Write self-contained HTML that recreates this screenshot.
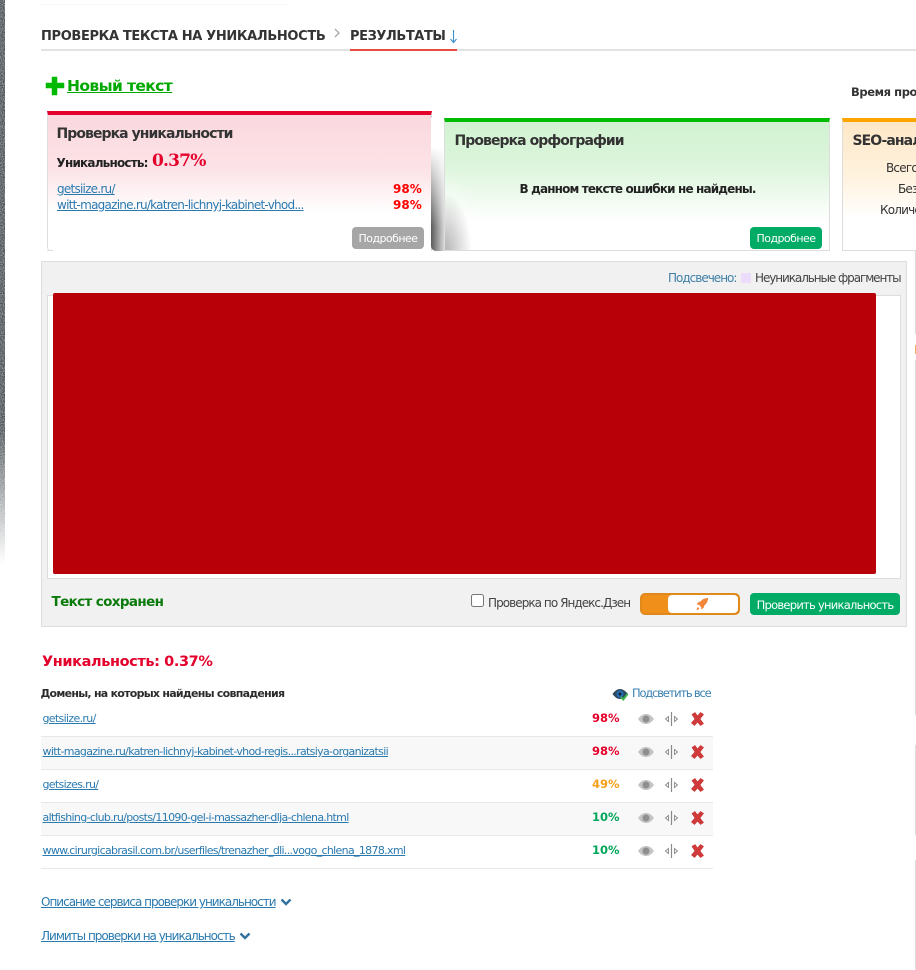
<!DOCTYPE html>
<html lang="ru"><head><meta charset="utf-8"><title>Проверка текста</title>
<style>
html,body{margin:0;padding:0;background:#fff}
#p{position:relative;width:916px;height:970px;overflow:hidden;background:#fff;font-family:"DejaVu Sans","Liberation Sans",sans-serif;color:#333}
#p div,#p a,#p svg{position:absolute;white-space:nowrap}
a{color:#2a7ab0;text-decoration:underline}
.b{font-weight:bold}
.s{font-size:11px;letter-spacing:-.67px;line-height:14px}
.h{font-size:14px;font-weight:bold;letter-spacing:-.94px;line-height:18px;color:#333}
.btn{border-radius:4px;color:#fff;text-align:center;font-size:11px;letter-spacing:-.55px;height:22px;line-height:23px}
.row{left:41px;width:672px;height:33px;border-bottom:1px solid #e8e8e8;box-sizing:border-box}
.pc{left:592px;font-size:11.5px;font-weight:bold;letter-spacing:0;line-height:14px}
</style></head><body><div id="p">

<svg style="left:0;top:0" width="5" height="575" viewBox="0 0 5 575">
<filter id="n" x="0" y="0" width="100%" height="100%"><feTurbulence type="fractalNoise" baseFrequency=".9" numOctaves="2" seed="4"/><feColorMatrix values="0 0 0 0 .45  0 0 0 0 .45  0 0 0 0 .47  1.600 0 0 0 -.55"/></filter>
<rect width="5" height="575" fill="#4a5155"/>
<rect width="5" height="575" filter="url(#n)" style="mix-blend-mode:screen"/>
</svg>
<div style="left:0;top:430px;width:6px;height:145px;background:linear-gradient(180deg,rgba(255,255,255,0),#fff 92%)"></div>
<div style="left:40px;top:4px;width:250px;height:1px;background:#f9f9f9"></div>

<div class="b" style="left:41px;top:28px;font-size:13px;letter-spacing:-.35px;line-height:18px;color:#333">ПРОВЕРКА ТЕКСТА НА УНИКАЛЬНОСТЬ</div>
<svg style="left:333px;top:28px" width="9" height="11" viewBox="0 0 9 11"><path d="M2 1l4 4-4 4" fill="none" stroke="#aaa" stroke-width="1.3"/></svg>
<div class="b" style="left:350px;top:28px;font-size:13px;letter-spacing:-.42px;line-height:18px;color:#333">РЕЗУЛЬТАТЫ</div>
<svg style="left:449px;top:29px" width="9" height="15" viewBox="0 0 9 15"><path d="M4.500 1v12M1.500 10l3 3.500 3-3.500" fill="none" stroke="#3a8fc5" stroke-width="1.100"/></svg>
<div style="left:41px;top:49px;width:875px;height:2px;background:#e2e2e2"></div>
<div style="left:350px;top:49px;width:107px;height:2px;background:#e74c3c"></div>

<svg style="left:45px;top:76px" width="20" height="20" viewBox="0 0 20 20"><path d="M7 1h5v6h7v5h-7v7H7v-7H1V7h6z" fill="#00b900" stroke="#00b900" stroke-width=".5" stroke-linejoin="round"/></svg>
<a class="b" href="#" style="left:67px;top:76px;font-size:15.500px;letter-spacing:-.62px;line-height:20px;color:#00a800">Новый текст</a>
<div class="b" style="left:851px;top:85px;font-size:11.500px;letter-spacing:-.4px;line-height:15px;color:#333">Время про</div>

<!-- card 1 -->
<div style="left:47px;top:111px;width:385px;height:140px;box-sizing:border-box;border-top:4px solid #e4002b;border-left:1px solid #ddd;border-right:1px solid #ddd;border-bottom-left-radius:4px;background:linear-gradient(180deg,#fad8de 0,#fce3e7 40%,#fff 72%,#fff 100%)"></div>
<div style="left:47px;top:250px;width:6px;height:1px;background:#ddd"></div>
<div class="h" style="left:56.500px;top:125px">Проверка уникальности</div>
<div class="b" style="left:56.500px;top:155px;font-size:12px;letter-spacing:-.8px;line-height:16px;color:#222">Уникальность:</div>
<div class="b" style="left:152px;top:150px;font-family:'DejaVu Serif','Liberation Serif',serif;font-size:17px;letter-spacing:-.8px;line-height:22px;color:#e4002b">0.37%</div>
<a class="s" href="#" style="left:57px;top:182px;font-size:12px;letter-spacing:-.75px">getsiize.ru/</a>
<a class="s" href="#" style="left:57px;top:198px;font-size:12px;letter-spacing:-.75px">witt-magazine.ru/katren-lichnyj-kabinet-vhod...</a>
<div class="b" style="left:393px;top:182px;font-size:12px;letter-spacing:0;line-height:14px;color:#f00">98%</div>
<div class="b" style="left:393px;top:198px;font-size:12px;letter-spacing:0;line-height:14px;color:#f00">98%</div>
<div class="btn" style="left:352px;top:227px;width:72px;background:#a6a6a6">Подробнее</div>

<!-- shadow between -->
<div style="left:431px;top:118px;width:13px;height:133px;border-bottom-left-radius:5px;background:linear-gradient(180deg,#fff 22%,rgba(255,255,255,0) 82%),linear-gradient(90deg,#5a5a5a,#d5d5d5)"></div>

<!-- card 2 -->
<div style="left:444px;top:118px;width:386px;height:133px;box-sizing:border-box;border-top:4px solid #00bb00;border-left:1px solid #ddd;border-right:1px solid #ddd;border-bottom:1px solid #ddd;background:linear-gradient(180deg,#d2f2d2 0,#dcf5dc 35%,#fff 78%)"></div>
<div style="left:445px;top:160px;width:40px;height:90px;background:radial-gradient(ellipse 38px 82px at 0 100%,rgba(130,130,130,.6),rgba(255,255,255,.25) 70%,rgba(255,255,255,0))"></div>
<div class="h" style="left:454.500px;top:132px">Проверка орфографии</div>
<div class="b" style="left:519.500px;top:181px;font-size:12px;letter-spacing:-.85px;line-height:16px;color:#222">В данном тексте ошибки не найдены.</div>
<div class="btn" style="left:750px;top:227px;width:72px;background:#00ab66">Подробнее</div>

<!-- card 3 -->
<div style="left:842px;top:118px;width:90px;height:133px;box-sizing:border-box;border-top:4px solid #ffa500;border-left:1px solid #ddd;border-bottom:1px solid #ddd;background:linear-gradient(180deg,#fee7c7 0,#fff3e0 45%,#fff 75%)"></div>
<div class="h" style="left:852.500px;top:132px">SEO-анализ</div>
<div class="s" style="left:886px;top:161px;font-size:12px;letter-spacing:-.8px">Всего символов</div>
<div class="s" style="left:898px;top:182px;font-size:12px;letter-spacing:-.8px">Без пробелов</div>
<div class="s" style="left:880px;top:203px;font-size:12px;letter-spacing:-.8px">Количество</div>

<!-- editor -->
<div style="left:41px;top:261px;width:866px;height:366px;box-sizing:border-box;background:#f1f1f1;border:1px solid #ddd"></div>
<div class="s" style="left:668px;top:271px;font-size:12px;letter-spacing:-1px;color:#3f7fa8">Подсвечено:</div>
<div style="left:741px;top:273px;width:10px;height:10px;background:#ecdcfb"></div>
<div class="s" style="left:755px;top:271px;font-size:12px;letter-spacing:-1.08px;color:#444">Неуникальные фрагменты</div>
<div style="left:47px;top:295px;width:854px;height:284px;box-sizing:border-box;background:#fff;border:1px solid #ddd"></div>
<div style="left:53px;top:293px;width:823px;height:281px;background:#b80008;border-radius:2px"></div>
<div class="b" style="left:51.500px;top:593px;font-size:13.500px;letter-spacing:-.63px;line-height:18px;color:#0a7a0a">Текст сохранен</div>

<div style="left:471px;top:594px;width:11px;height:11px;background:#fff;border:1px solid #767676;border-radius:2.500px"></div>
<div class="s" style="left:488px;top:596px;font-size:12px;letter-spacing:-.95px;color:#444">Проверка по Яндекс.Дзен</div>
<div style="left:640px;top:593px;width:100px;height:22px;box-sizing:border-box;background:#f0901a;border:2px solid #e08a1c;border-radius:5px"></div>
<div style="left:668px;top:595px;width:70px;height:18px;background:#fff;border-radius:4px"></div>
<svg style="left:695px;top:597px" width="14" height="14" viewBox="0 0 14 14"><path d="M13 1c-3 0-5.500 1-7.500 3.500L3.500 5 1.500 7.500l2.500.300L6 10l.300 2.500L8.800 10.500l.500-2C12 6.500 13 4 13 1zM3 10c-1 .700-1.300 2-1.500 3 1-.2 2.300-.5 3-1.500z" fill="#f0873a"/></svg>
<div class="btn" style="left:750px;top:593px;width:150px;background:#00ab66;border-radius:4px;letter-spacing:-.74px;font-size:11.500px;line-height:24px">Проверить уникальность</div>

<!-- right sliver -->
<div style="left:915px;top:250px;width:1px;height:84px;background:#ddd"></div>
<div style="left:915px;top:345px;width:1px;height:9px;background:#f0b060"></div>
<div style="left:915px;top:360px;width:1px;height:355px;background:#ddd"></div>
<div style="left:915px;top:745px;width:1px;height:90px;background:#ddd"></div>
<div style="left:915px;top:860px;width:1px;height:110px;background:#ddd"></div>

<!-- results -->
<div class="b" style="left:42px;top:653px;font-size:14.500px;letter-spacing:-.4px;line-height:19px;color:#e4002b">Уникальность: 0.37%</div>
<div class="b" style="left:40.500px;top:687px;font-size:11px;letter-spacing:-.74px;line-height:14px;color:#2b2b2b">Домены, на которых найдены совпадения</div>
<svg style="left:612px;top:688px" width="17" height="13" viewBox="0 0 17 13"><path d="M.5 6C3 2.500 5.500 1 8 1s5 1.500 8 5c-3 3.500-5.500 5-8 5S3 9.500.5 6z" fill="#2d4a63"/><circle cx="8" cy="6" r="3.500" fill="#2a6fb5"/><circle cx="8" cy="6" r="1.500" fill="#0e2338"/><path d="M9 9l2.300 2.500L15.500 6" fill="none" stroke="#3db54a" stroke-width="2"/></svg>
<div class="s" style="left:632px;top:686px;font-size:11.500px;letter-spacing:-1.2px;color:#3a80b0">Подсветить все</div>

<div class="row" style="top:704px"></div>
<div class="row" style="top:737px;background:#f8f8f8"></div>
<div class="row" style="top:770px"></div>
<div class="row" style="top:803px;background:#f8f8f8"></div>
<div class="row" style="top:836px"></div>

<a class="s" href="#" style="left:42.500px;top:712px">getsiize.ru/</a>
<a class="s" href="#" style="left:42.500px;top:745px">witt-magazine.ru/katren-lichnyj-kabinet-vhod-regis...ratsiya-organizatsii</a>
<a class="s" href="#" style="left:42.500px;top:778px">getsizes.ru/</a>
<a class="s" href="#" style="left:42.500px;top:811px">altfishing-club.ru/posts/11090-gel-i-massazher-dlja-chlena.html</a>
<a class="s" href="#" style="left:42.500px;top:844px">www.cirurgicabrasil.com.br/userfiles/trenazher_dli...vogo_chlena_1878.xml</a>

<div class="pc" style="top:711px;color:#e4002b">98%</div>
<div class="pc" style="top:744px;color:#e4002b">98%</div>
<div class="pc" style="top:777px;color:#f5a01a">49%</div>
<div class="pc" style="top:810px;color:#00a65a">10%</div>
<div class="pc" style="top:843px;color:#00a65a">10%</div>

<svg style="left:630px;top:705px" width="80" height="165" viewBox="0 0 80 165">
<defs>
<g id="r">
<path d="M8 14c3-4 5.500-5 8-5s5 1 8 5c-3 4-5.500 5-8 5s-5-1-8-5z" fill="#c4c4c4"/>
<circle cx="16" cy="14" r="3.500" fill="#8f8f8f"/>
<path d="M41.500 7v14" stroke="#8a8a8a" stroke-width="1.200"/>
<path d="M38.500 11.500l-3 2.500 3 2.500zM44.500 11.500l3 2.500-3 2.500z" fill="#fff" stroke="#888" stroke-width=".9"/>
<path d="M62 9.500l3-2 2.500 3.500 3-3.500 3 2-3.500 4.500 3.500 4.500-3 2-3-3.500-3 3.500-3-2.500 3.500-4z" fill="#d03a3a" stroke="#c62f2f" stroke-width=".6"/>
</g>
</defs>
<use href="#r" y="0"/><use href="#r" y="33"/><use href="#r" y="66"/><use href="#r" y="99"/><use href="#r" y="132"/>
</svg>

<a class="s" href="#" style="left:41px;top:895px;font-size:12px;letter-spacing:-1px">Описание сервиса проверки уникальности</a>
<svg style="left:280px;top:898px" width="12" height="9" viewBox="0 0 12 9"><path d="M1.500 1.500L6 6l4.500-4.500" fill="none" stroke="#33729f" stroke-width="2.400"/></svg>
<a class="s" href="#" style="left:41px;top:929px;font-size:12px;letter-spacing:-1px">Лимиты проверки на уникальность</a>
<svg style="left:239px;top:932px" width="12" height="9" viewBox="0 0 12 9"><path d="M1.500 1.500L6 6l4.500-4.500" fill="none" stroke="#33729f" stroke-width="2.400"/></svg>
</div></body></html>
